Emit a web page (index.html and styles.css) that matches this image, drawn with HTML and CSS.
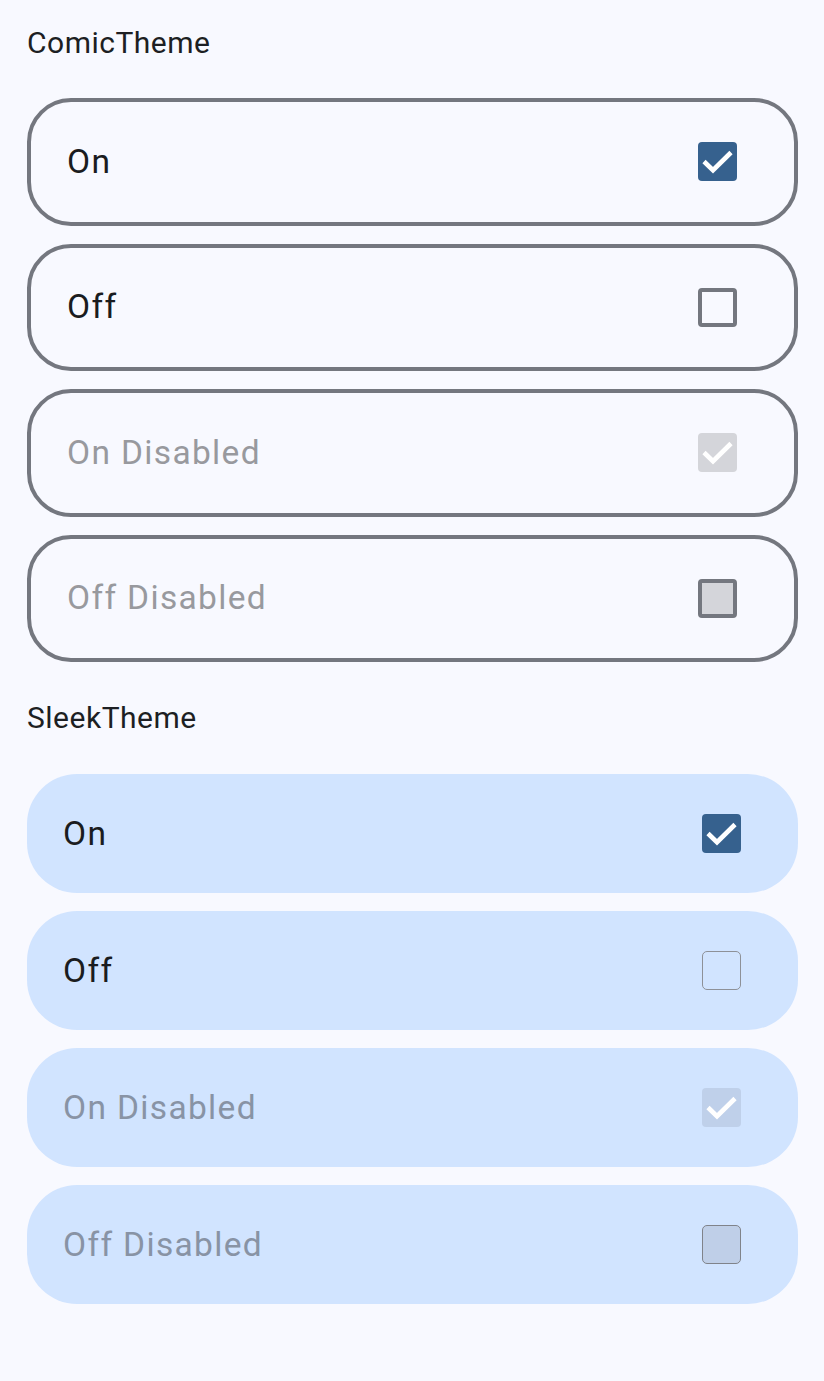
FILE: index.html
```html
<!DOCTYPE html>
<html>
<head>
<meta charset="utf-8">
<link rel="stylesheet" href="styles.css">
</head>
<body>
<main class="page">
  <section class="section">
    <h2 class="section-title">ComicTheme</h2>
    <div class="list">
      <div class="tile comic">
        <span class="label">On</span>
        <span class="box checked"><svg viewBox="0 0 39 39"><path d="M6 19.5 L15 28.2 L33 10.5"/></svg></span>
      </div>
      <div class="tile comic">
        <span class="label">Off</span>
        <span class="box unchecked"></span>
      </div>
      <div class="tile comic disabled">
        <span class="label">On Disabled</span>
        <span class="box checked"><svg viewBox="0 0 39 39"><path d="M6 19.5 L15 28.2 L33 10.5"/></svg></span>
      </div>
      <div class="tile comic disabled">
        <span class="label">Off Disabled</span>
        <span class="box unchecked"></span>
      </div>
    </div>
  </section>
  <section class="section">
    <h2 class="section-title">SleekTheme</h2>
    <div class="list">
      <div class="tile sleek">
        <span class="label">On</span>
        <span class="box checked"><svg viewBox="0 0 39 39"><path d="M6 19.5 L15 28.2 L33 10.5"/></svg></span>
      </div>
      <div class="tile sleek">
        <span class="label">Off</span>
        <span class="box unchecked"></span>
      </div>
      <div class="tile sleek disabled">
        <span class="label">On Disabled</span>
        <span class="box checked"><svg viewBox="0 0 39 39"><path d="M6 19.5 L15 28.2 L33 10.5"/></svg></span>
      </div>
      <div class="tile sleek disabled">
        <span class="label">Off Disabled</span>
        <span class="box unchecked"></span>
      </div>
    </div>
  </section>
</main>
</body>
</html>
```

FILE: styles.css
```css
html, body {
  margin: 0;
  padding: 0;
  background: #f8f9ff;
}

body {
  font-family: Roboto, "Noto Sans", sans-serif;
  color: #1a1c20;
}

.page {
  padding: 25.5px 26px 0 27px;
  display: flex;
  flex-direction: column;
  gap: 39.4px;
}

.section-title {
  margin: 0 0 38.5px 0;
  font-size: 30px;
  font-weight: 400;
  letter-spacing: 0.5px;
  line-height: 34px;
  color: #1d1f23;
}

.list {
  display: flex;
  flex-direction: column;
}

.tile {
  display: flex;
  align-items: center;
  justify-content: space-between;
  height: 119.5px;
  padding: 0 57px 0 36px;
}

.tile.comic {
  border: 4px solid #74777f;
  border-radius: 44px;
  margin-bottom: 18px;
}

.tile.sleek {
  background: #d1e4ff;
  border-radius: 50px;
  margin-bottom: 17.5px;
}

.tile:last-child {
  margin-bottom: 0;
}

.label {
  font-size: 33.5px;
  letter-spacing: 1.35px;
  line-height: 40px;
  color: #1a1c20;
}

.disabled .label {
  color: #98999e;
}

.sleek.disabled .label {
  color: #8893a5;
}

.box {
  box-sizing: border-box;
  width: 39px;
  height: 39px;
  border-radius: 4px;
  display: flex;
  flex: none;
}

.box svg {
  width: 39px;
  height: 39px;
}

.box svg path {
  fill: none;
  stroke: #ffffff;
  stroke-width: 4.6px;
}

.box.checked {
  background: #36618e;
}

.box.unchecked {
  border: 4px solid #74777f;
}

.comic.disabled .box.checked {
  background: #d4d5da;
}

.comic.disabled .box.unchecked {
  background: #d4d5da;
}

.sleek .box.unchecked {
  border: 1.5px solid #8e9198;
  border-radius: 5px;
}

.sleek.disabled .box.checked {
  background: #bfd0ea;
}

.sleek.disabled .box.unchecked {
  background: #bfcfe8;
  border-color: #80838a;
}
```
